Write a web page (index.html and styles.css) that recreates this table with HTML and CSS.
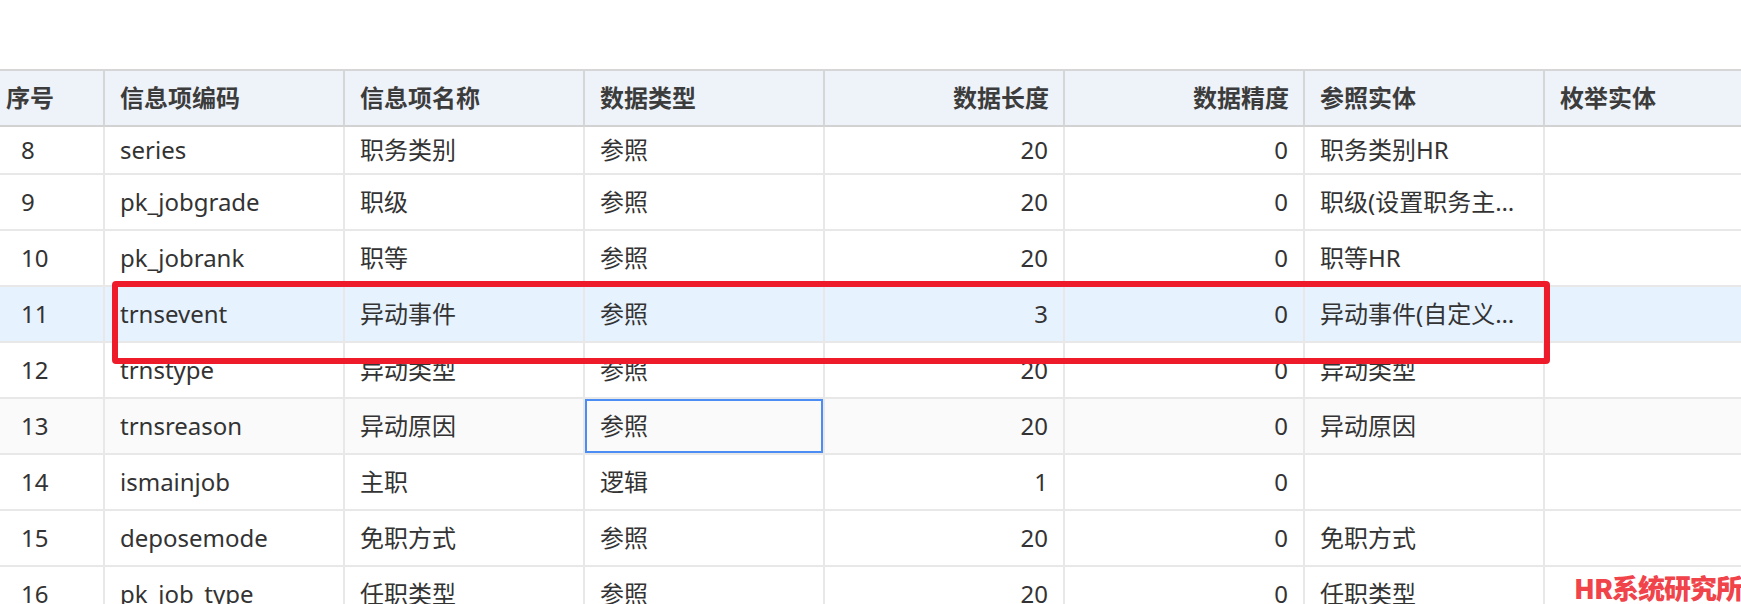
FILE: index.html
```html
<!DOCTYPE html>
<html lang="zh-CN">
<head>
<meta charset="utf-8">
<title>信息项列表</title>
<link rel="stylesheet" href="styles.css">
</head>
<body>
<div class="page">
  <div class="grid">
    <div class="row head">
      <div class="cell idx">序号</div>
      <div class="cell">信息项编码</div>
      <div class="cell">信息项名称</div>
      <div class="cell">数据类型</div>
      <div class="cell num">数据长度</div>
      <div class="cell num">数据精度</div>
      <div class="cell">参照实体</div>
      <div class="cell">枚举实体</div>
    </div>
    <div class="row body short">
      <div class="cell idx">8</div>
      <div class="cell">series</div>
      <div class="cell">职务类别</div>
      <div class="cell">参照</div>
      <div class="cell num">20</div>
      <div class="cell num">0</div>
      <div class="cell">职务类别HR</div>
      <div class="cell"></div>
    </div>
    <div class="row body">
      <div class="cell idx">9</div>
      <div class="cell">pk_jobgrade</div>
      <div class="cell">职级</div>
      <div class="cell">参照</div>
      <div class="cell num">20</div>
      <div class="cell num">0</div>
      <div class="cell">职级(设置职务主序列)</div>
      <div class="cell"></div>
    </div>
    <div class="row body">
      <div class="cell idx">10</div>
      <div class="cell">pk_jobrank</div>
      <div class="cell">职等</div>
      <div class="cell">参照</div>
      <div class="cell num">20</div>
      <div class="cell num">0</div>
      <div class="cell">职等HR</div>
      <div class="cell"></div>
    </div>
    <div class="row body active">
      <div class="cell idx">11</div>
      <div class="cell">trnsevent</div>
      <div class="cell">异动事件</div>
      <div class="cell">参照</div>
      <div class="cell num">3</div>
      <div class="cell num">0</div>
      <div class="cell">异动事件(自定义档案)</div>
      <div class="cell"></div>
    </div>
    <div class="row body">
      <div class="cell idx">12</div>
      <div class="cell">trnstype</div>
      <div class="cell">异动类型</div>
      <div class="cell">参照</div>
      <div class="cell num">20</div>
      <div class="cell num">0</div>
      <div class="cell">异动类型</div>
      <div class="cell"></div>
    </div>
    <div class="row body stripe">
      <div class="cell idx">13</div>
      <div class="cell">trnsreason</div>
      <div class="cell">异动原因</div>
      <div class="cell selected">参照</div>
      <div class="cell num">20</div>
      <div class="cell num">0</div>
      <div class="cell">异动原因</div>
      <div class="cell"></div>
    </div>
    <div class="row body">
      <div class="cell idx">14</div>
      <div class="cell">ismainjob</div>
      <div class="cell">主职</div>
      <div class="cell">逻辑</div>
      <div class="cell num">1</div>
      <div class="cell num">0</div>
      <div class="cell"></div>
      <div class="cell"></div>
    </div>
    <div class="row body">
      <div class="cell idx">15</div>
      <div class="cell">deposemode</div>
      <div class="cell">免职方式</div>
      <div class="cell">参照</div>
      <div class="cell num">20</div>
      <div class="cell num">0</div>
      <div class="cell">免职方式</div>
      <div class="cell"></div>
    </div>
    <div class="row body">
      <div class="cell idx">16</div>
      <div class="cell">pk_job_type</div>
      <div class="cell">任职类型</div>
      <div class="cell">参照</div>
      <div class="cell num">20</div>
      <div class="cell num">0</div>
      <div class="cell">任职类型</div>
      <div class="cell"></div>
    </div>
  </div>
  <div class="mark"></div>
  <div class="watermark">HR系统研究所</div>
</div>
</body>
</html>
```
FILE: styles.css
```css
html, body {
  margin: 0;
  padding: 0;
  overflow: hidden;
  background: #ffffff;
}

.page {
  position: relative;
  width: 1741px;
  height: 604px;
  overflow: hidden;
  font-family: "Noto Sans", "Noto Sans CJK SC", sans-serif;
  font-size: 24px;
  color: #333333;
}

.grid {
  margin-top: 69px;
  border-top: 2px solid #d6d6d6;
}

.row {
  display: grid;
  grid-template-columns: 105px repeat(6, 240px) 1fr;
  height: 56px;
}

.row.short {
  height: 48px;
}

.cell {
  box-sizing: border-box;
  display: flex;
  align-items: center;
  min-width: 0;
  padding: 0 15px;
  border-right: 2px solid #e8e8e8;
  border-bottom: 2px solid #e8e8e8;
  white-space: nowrap;
  overflow: hidden;
  line-height: 1.2;
}

.cell:last-child {
  border-right: none;
}

.cell.num {
  justify-content: flex-end;
  padding-right: 15px;
}

.body .cell.idx {
  padding-left: 21px;
}

.head .cell {
  background: #eef3fa;
  font-weight: 700;
  color: #3c3c3c;
  border-right-color: #d6d6d6;
  border-bottom-color: #d2d2d2;
}

.head .cell.num {
  padding-right: 14px;
}

.head .cell.idx {
  padding-left: 6px;
}

.body .cell:not(.num) {
  display: block;
  line-height: 54px;
  text-overflow: ellipsis;
}

.body.short .cell:not(.num) {
  line-height: 46px;
}

.active .cell {
  background: #e6f2fe;
}

.stripe .cell {
  background: #fafafa;
}

.cell.selected {
  box-shadow: inset 0 0 0 2px #4b8cf5;
}

.mark {
  position: absolute;
  left: 112px;
  top: 281px;
  width: 1438px;
  height: 83px;
  box-sizing: border-box;
  border: 6px solid #ee1c2a;
  border-radius: 4px;
}

.watermark {
  position: absolute;
  right: -1px;
  top: 572px;
  font-family: "Noto Sans CJK SC", sans-serif;
  font-weight: 900;
  font-size: 27px;
  line-height: 1.2;
  color: #f0434a;
  letter-spacing: -1px;
}
```
